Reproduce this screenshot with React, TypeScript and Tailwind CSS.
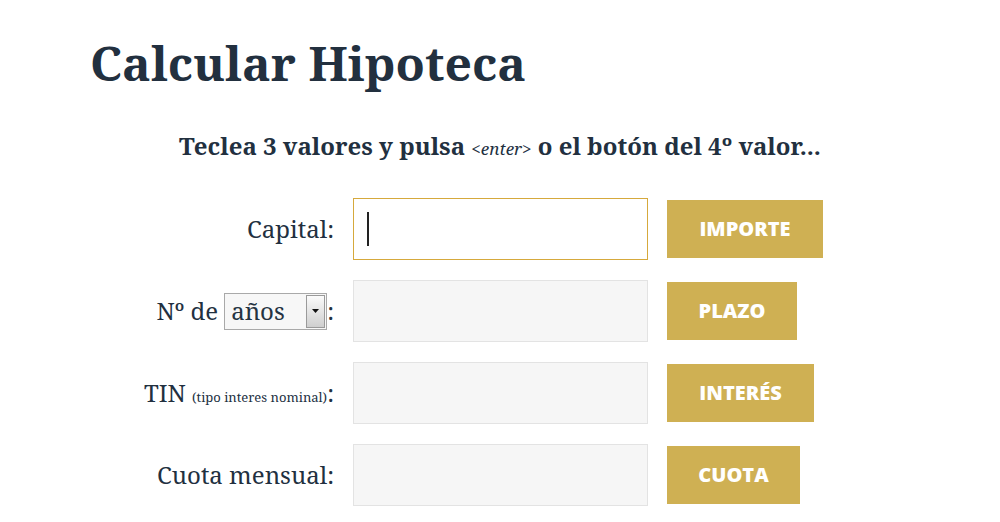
import { useState } from "react";

const serif = "font-['Noto_Serif','DejaVu_Serif',serif]";

type Row = {
  label: React.ReactNode;
  button: string;
  btnWidth: string;
  focused?: boolean;
};

function YearsSelect() {
  const [years, setYears] = useState("años");
  return (
    <span className="relative ml-[6px] inline-block">
      <select
        value={years}
        onChange={(e) => setYears(e.target.value)}
        className="block h-[37px] w-[103px] appearance-none border border-[#a9a9a9] bg-[#f7f7f7] pl-[6px] text-[24px] leading-none text-[#253342]"
      >
        <option>años</option>
        <option>meses</option>
      </select>
      {/* flecha del select */}
      <span className="pointer-events-none absolute right-[2px] top-[2px] flex h-[33px] w-[19px] items-center justify-center border border-[#9a9a9a] bg-gradient-to-b from-[#fbfbfb] to-[#cfcfcf]">
        <svg width="7" height="4" viewBox="0 0 7 4">
          <path d="M0 0h7L3.5 4z" fill="#111" />
        </svg>
      </span>
    </span>
  );
}

export default function App() {
  const rows: Row[] = [
    { label: "Capital:", button: "IMPORTE", btnWidth: "w-[156px]", focused: true },
    {
      label: (
        <span className="inline-flex items-center">
          Nº de
          <YearsSelect />
          :
        </span>
      ),
      button: "PLAZO",
      btnWidth: "w-[130px]",
    },
    {
      label: (
        <>
          TIN <span className="text-[13px]">(tipo interes nominal)</span>:
        </>
      ),
      button: "INTERÉS",
      btnWidth: "w-[147px]",
    },
    { label: "Cuota mensual:", button: "CUOTA", btnWidth: "w-[133px]" },
  ];

  return (
    <div className={`min-h-[522px] bg-white text-[#22303f] ${serif}`}>
      <div className="pl-[90px] pt-[28px]">
        <h1 className="text-[48px] font-bold leading-[70px]">Calcular Hipoteca</h1>
      </div>

      <p className="mt-[30px] text-center text-[24px] font-bold">
        Teclea 3 valores y pulsa <em className="text-[17px] font-normal">&lt;enter&gt;</em> o el botón del 4º valor...
      </p>

      <form className="mt-[34px] flex flex-col gap-[20px]" onSubmit={(e) => e.preventDefault()}>
        {rows.map((r) => (
          <div key={r.button} className="flex items-center">
            <div className="w-[334px] text-right text-[24px]">{r.label}</div>
            <div className="relative ml-[19px]">
              <input
                className={`block h-[62px] w-[295px] border px-4 text-[20px] outline-none ${
                  r.focused ? "border-[#d6a93c] bg-white" : "border-[#e3e3e3] bg-[#f6f6f6]"
                }`}
              />
              {r.focused && (
                <span className="pointer-events-none absolute left-[14px] top-[14px] h-[34px] w-[2px] bg-[#222]" />
              )}
            </div>
            <button
              type="button"
              className={`ml-[19px] h-[58px] ${r.btnWidth} bg-[#cfb053] text-[20px] font-extrabold text-white font-['Open_Sans',sans-serif]`}
            >
              {r.button}
            </button>
          </div>
        ))}
      </form>
    </div>
  );
}
